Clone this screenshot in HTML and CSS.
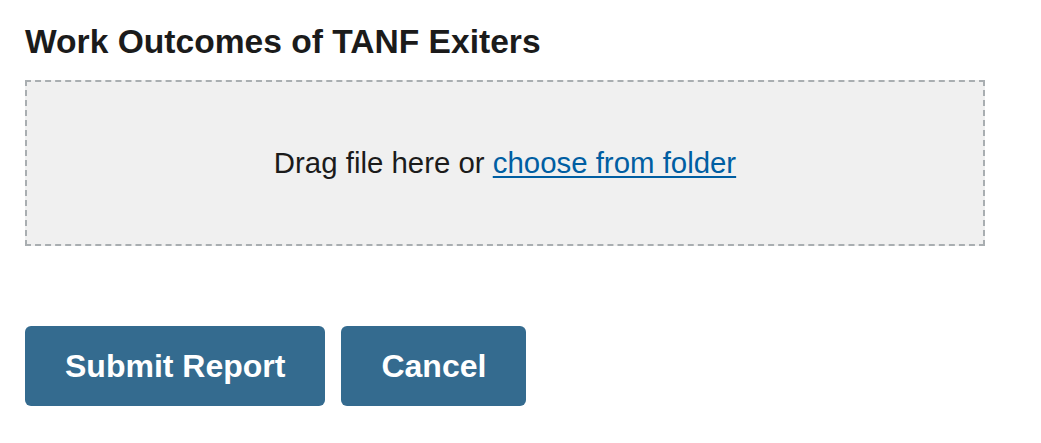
FILE: index.html
```html
<!DOCTYPE html>
<html lang="en">
<head>
<meta charset="utf-8">
<title>Work Outcomes of TANF Exiters</title>
<link rel="stylesheet" href="styles.css">
</head>
<body>
<main class="page">
  <h2 class="title">Work Outcomes of TANF Exiters</h2>
  <div class="dropzone">
    <span class="drop-text">Drag file here or <a href="#" class="choose">choose from folder</a></span>
  </div>
  <div class="actions">
    <button class="btn" type="button">Submit Report</button>
    <button class="btn" type="button">Cancel</button>
  </div>
</main>
</body>
</html>
```

FILE: styles.css
```css
html, body {
  margin: 0;
  padding: 0;
  background: #ffffff;
}

body {
  font-family: "Liberation Sans", Arial, Helvetica, sans-serif;
  color: #1b1b1b;
}

.page {
  padding: 22px 25px 0 25px;
  display: flex;
  flex-direction: column;
  align-items: flex-start;
}

.title {
  margin: 0;
  font-size: 33.6px;
  font-weight: 700;
  line-height: 40px;
  color: #1b1b1b;
}

.dropzone {
  box-sizing: border-box;
  margin-top: 18px;
  width: 960px;
  height: 166px;
  background: #f0f0f0;
  border: 2px dashed #a9aeb1;
  display: flex;
  align-items: center;
  justify-content: center;
}

.drop-text {
  font-size: 29.4px;
  line-height: 36px;
  color: #1b1b1b;
}

.choose {
  color: #005ea2;
  text-decoration: underline;
  text-underline-offset: 3px;
  text-decoration-thickness: 2px;
}

.actions {
  margin-top: 80px;
  display: flex;
  gap: 16px;
}

.btn {
  font-family: "Liberation Sans", Arial, Helvetica, sans-serif;
  font-size: 32px;
  font-weight: 700;
  color: #ffffff;
  background: #346b8f;
  border: none;
  border-radius: 6px;
  height: 80px;
  padding: 0 40px;
  cursor: pointer;
}
```
